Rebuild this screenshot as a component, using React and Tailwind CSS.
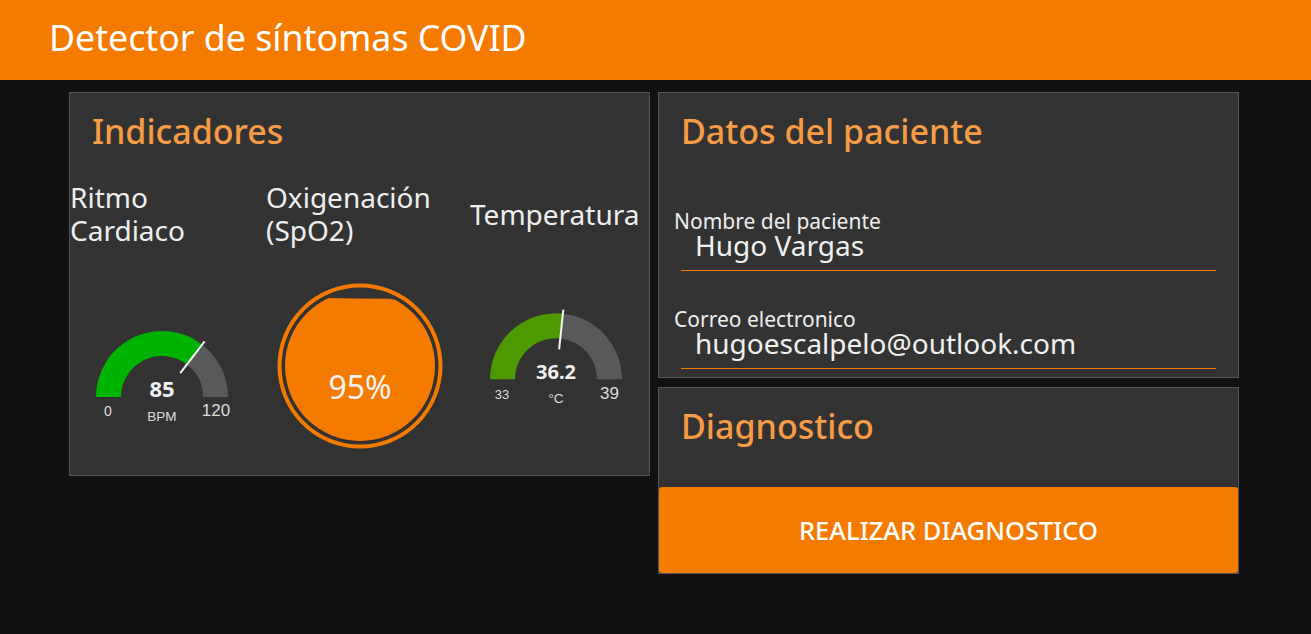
import React from 'react';

const ORANGE = '#f47a00';

// sector of a half-ring, f0..f1 measured from the left end (0) to the right end (1)
const arcPath = (cx, cy, r0, r1, f0, f1) => {
  const pt = (r, f) => {
    const a = Math.PI * (1 - f);
    return [cx + r * Math.cos(a), cy - r * Math.sin(a)];
  };
  const [x0, y0] = pt(r1, f0);
  const [x1, y1] = pt(r1, f1);
  const [x2, y2] = pt(r0, f1);
  const [x3, y3] = pt(r0, f0);
  return `M${x0} ${y0} A${r1} ${r1} 0 0 1 ${x1} ${y1} L${x2} ${y2} A${r0} ${r0} 0 0 0 ${x3} ${y3} Z`;
};

const needle = (cx, cy, f) => {
  const a = Math.PI * (1 - f);
  return {
    x1: cx + 30 * Math.cos(a),
    y1: cy - 30 * Math.sin(a),
    x2: cx + 70 * Math.cos(a),
    y2: cy - 70 * Math.sin(a),
  };
};

const HalfGauge = ({ width, cx, cy, frac, color, value, unit, min, max }) => {
  const n = needle(cx, cy, frac);
  return (
    <svg width={width} height="228" className="block">
      <path d={arcPath(cx, cy, 41, 66, 0, frac)} fill={color} />
      <path d={arcPath(cx, cy, 41, 66, frac, 1)} fill="#595959" />
      <line {...n} stroke="#f2f2f2" strokeWidth="2" />
      <text x={cx} y={cy - 0.5} textAnchor="middle" fill="#f0f0f0" fontFamily="Noto Sans, sans-serif" fontWeight="700" fontSize={value.size}>
        {value.text}
      </text>
      <text x={unit.x} y={unit.y} textAnchor="middle" fill="#dcdcdc" fontFamily="Liberation Sans, Arial, sans-serif" fontSize="13.5">
        {unit.text}
      </text>
      <text x={min.x} y={min.y} textAnchor="middle" fill="#dcdcdc" fontFamily="Liberation Sans, Arial, sans-serif" fontSize={min.size}>
        {min.text}
      </text>
      <text x={max.x} y={max.y} textAnchor="middle" fill="#dcdcdc" fontFamily="Liberation Sans, Arial, sans-serif" fontSize={max.size}>
        {max.text}
      </text>
    </svg>
  );
};

const LevelGauge = () => (
  <svg width="204" height="228" className="block">
    <defs>
      <clipPath id="spo2-clip">
        <circle cx="94" cy="119" r="75" />
      </clipPath>
    </defs>
    <circle cx="94" cy="119" r="80.5" fill="none" stroke={ORANGE} strokeWidth="4" />
    <path
      d="M0 51 Q30 50.6 60 51 T124 51.8 L130 53 L204 56 L204 228 L0 228 Z"
      fill={ORANGE}
      clipPath="url(#spo2-clip)"
    />
    <text x="94" y="152" textAnchor="middle" fill="#f2f2f2" fontFamily="Noto Sans, sans-serif" fontSize="32">
      95%
    </text>
  </svg>
);

const Field = ({ label, value, className }) => (
  <div className={`mx-[22px] ${className}`}>
    <div className="-ml-[7px] text-[21px] leading-[22px] text-[#eeeeee]">{label}</div>
    <div className="pl-[14px] pb-[12px] text-[28px] leading-[26px] text-[#f0f0f0] border-b border-[#f47a00]">{value}</div>
  </div>
);

export default function App() {
  return (
    <div className="min-h-screen bg-[#111111] font-['Noto_Sans',sans-serif]">
      <header className="h-[80px] bg-[#f47a00] pl-[49px] pt-[15px]">
        <h1 className="text-[35.7px] leading-[44px] text-white">Detector de síntomas COVID</h1>
      </header>

      <main className="flex gap-[8px] pl-[69px] pt-[12px]">
        <section className="w-[581px] h-[384px] bg-[#333333] border border-[#555555]">
          <h2 className="pl-[22px] pt-[17px] text-[34px] leading-[42px] font-medium text-[#f79b45]">Indicadores</h2>
          <div className="flex mt-[29px]">
            <div className="w-[196px]">
              <div className="h-[66px] flex items-center text-[28px] leading-[33px] text-[#eeeeee]">
                Ritmo
                <br />
                Cardiaco
              </div>
              <HalfGauge
                width={196}
                cx={92}
                cy={150}
                frac={85 / 120}
                color="#00b300"
                value={{ text: '85', size: 22 }}
                unit={{ text: 'BPM', x: 92, y: 174 }}
                min={{ text: '0', x: 38, y: 169, size: 14 }}
                max={{ text: '120', x: 146, y: 168.7, size: 17 }}
              />
            </div>
            <div className="w-[204px]">
              <div className="h-[66px] flex items-center text-[28px] leading-[33px] text-[#eeeeee]">
                Oxigenación
                <br />
                (SpO2)
              </div>
              <LevelGauge />
            </div>
            <div className="w-[179px]">
              <div className="h-[66px] flex items-center text-[28px] leading-[33px] text-[#eeeeee] whitespace-nowrap">Temperatura</div>
              <HalfGauge
                width={179}
                cx={86}
                cy={132.3}
                frac={3.2 / 6}
                color="#4c9900"
                value={{ text: '36.2', size: 20 }}
                unit={{ text: '°C', x: 86, y: 156.3 }}
                min={{ text: '33', x: 32, y: 152.3, size: 13 }}
                max={{ text: '39', x: 139.5, y: 152.3, size: 17 }}
              />
            </div>
          </div>
        </section>

        <div className="w-[581px] flex flex-col gap-[9px]">
          <section className="h-[286px] bg-[#333333] border border-[#555555]">
            <h2 className="pl-[22px] pt-[17px] text-[34px] leading-[42px] font-medium text-[#f79b45]">Datos del paciente</h2>
            <Field className="mt-[58px]" label="Nombre del paciente" value="Hugo Vargas" />
            <Field className="mt-[37px]" label="Correo electronico" value="hugoescalpelo@outlook.com" />
          </section>
          <section className="h-[187px] bg-[#333333] border border-[#555555] flex flex-col">
            <h2 className="pl-[22px] pt-[17px] text-[34px] leading-[42px] font-medium text-[#f79b45]">Diagnostico</h2>
            <button className="mt-auto h-[86px] w-full bg-[#f47a00] rounded-[3px] flex items-center justify-center text-[25.5px] leading-[30px] font-medium text-white">
              REALIZAR DIAGNOSTICO
            </button>
          </section>
        </div>
      </main>
    </div>
  );
}
